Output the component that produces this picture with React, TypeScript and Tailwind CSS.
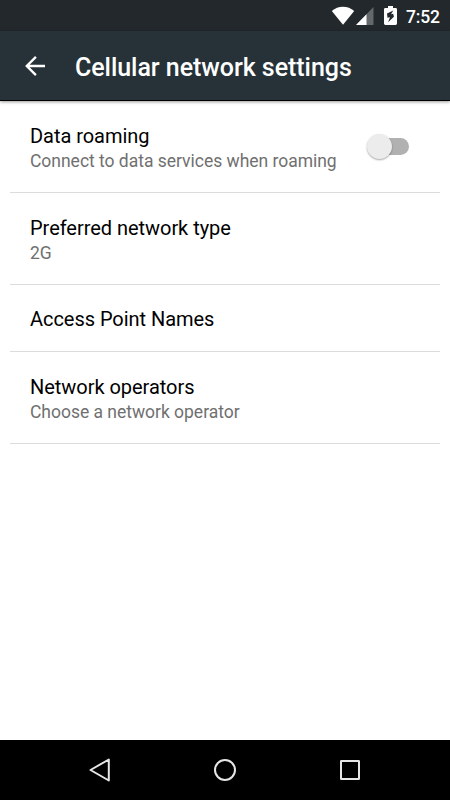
import type { ReactNode } from 'react';

type PreferenceProps = {
  title: string;
  summary?: string;
  heightClass: string;
  children?: ReactNode;
};

function Preference({ title, summary, heightClass, children }: PreferenceProps) {
  return (
    <li
      className={`mx-2.5 flex items-center justify-between border-b border-[#dcdcdc] pr-[31px] pl-5 ${heightClass}`}
    >
      <div className={summary ? 'pt-[3px]' : 'pt-px'}>
        <p className="text-[20px] leading-[26px] tracking-[-0.04px] text-black">{title}</p>
        {summary && (
          <p className="text-[17.5px] leading-[25px] tracking-[-0.02px] text-[#707070]">
            {summary}
          </p>
        )}
      </div>
      {children}
    </li>
  );
}

function StatusBar() {
  return (
    <div className="flex h-[31px] items-start justify-end bg-[#22282b] pr-[10px] text-white">
      {/* Wifi */}
      <svg className="mt-[6px] h-[19px] w-6" viewBox="0 0 24 19" fill="currentColor">
        <path d="M.8 5.100C4 2.200 7.800.8 12 .8s8 1.400 11.200 4.300L12 18.800Z" />
      </svg>

      {/* Cell signal */}
      <svg className="mt-[7px] ml-px h-[18px] w-[18px]" viewBox="0 0 18 18" fill="currentColor">
        <path d="M17.500 0v18H0Z" opacity=".3" />
        <path d="M10.500 7.200V18H0Z" />
      </svg>

      {/* Battery charging */}
      <svg className="mt-[6px] ml-[10px] h-[19px] w-[13px]" viewBox="0 0 13 19">
        <path
          fill="currentColor"
          d="M4 0h5v2h2.600Q13 2 13 3.400v14.200Q13 19 11.600 19H1.400Q0 19 0 17.600V3.400Q0 2 1.400 2H4Z"
        />
        <path fill="#22282b" d="M9.300 4.600 3 7.600l.5 4.200 2.500-.6-1.900 5 5.800-5.500-.7-3-2.200.6Z" />
      </svg>

      <span className="ml-[9px] w-[34px] text-[17.5px] leading-[34px] font-medium tracking-[-0.2px] whitespace-nowrap">
        7:52
      </span>
    </div>
  );
}

function NavigationBar() {
  return (
    <nav className="flex h-[60px] items-center justify-around bg-black px-[37px] text-[#e6e6e6]">
      {[
        <path key="back" d="M22.800 3.500v21L4.500 14Z" />,
        <circle key="home" cx="14" cy="14" r="10" />,
        <rect key="recent" x="5" y="5" width="18" height="18" rx=".3" />,
      ].map((shape) => (
        <svg
          key={shape.key}
          className="h-7 w-7"
          viewBox="0 0 28 28"
          fill="none"
          stroke="currentColor"
          strokeWidth={2}
          strokeLinejoin="round"
        >
          {shape}
        </svg>
      ))}
    </nav>
  );
}

export default function App() {
  return (
    <div className="flex h-[800px] w-[450px] flex-col overflow-hidden bg-white font-['Roboto',sans-serif]">
      <StatusBar />

      <header className="z-10 flex h-[70px] items-center border-b border-black bg-[#263238] text-white shadow-[0_1px_3px_rgba(0,0,0,0.4)]">
        <svg
          className="mt-px ml-[25px] h-5 w-5"
          viewBox="0 0 20 20"
          fill="none"
          stroke="currentColor"
          strokeWidth={2.4}
        >
          <path d="M20 10H2M10.900.9 1.800 10l9.100 9.100" />
        </svg>
        <h1 className="mt-[4px] ml-[30px] text-[25px] leading-8 font-medium tracking-[-0.05px]">
          Cellular network settings
        </h1>
      </header>

      <ul className="flex-1">
        <Preference
          title="Data roaming"
          summary="Connect to data services when roaming"
          heightClass="h-[92px]"
        >
          {/* Switch, off */}
          <div className="flex h-[17px] w-[33px] items-center rounded-full bg-[#b1b1b1]">
            <span className="-ml-[9px] h-[25px] w-[25px] shrink-0 rounded-full bg-[#ececec] shadow-[0_1px_2px_rgba(0,0,0,0.35)]" />
          </div>
        </Preference>
        <Preference title="Preferred network type" summary="2G" heightClass="h-[92px]" />
        <Preference title="Access Point Names" heightClass="h-[67px]" />
        <Preference
          title="Network operators"
          summary="Choose a network operator"
          heightClass="h-[92px]"
        />
      </ul>

      <NavigationBar />
    </div>
  );
}
